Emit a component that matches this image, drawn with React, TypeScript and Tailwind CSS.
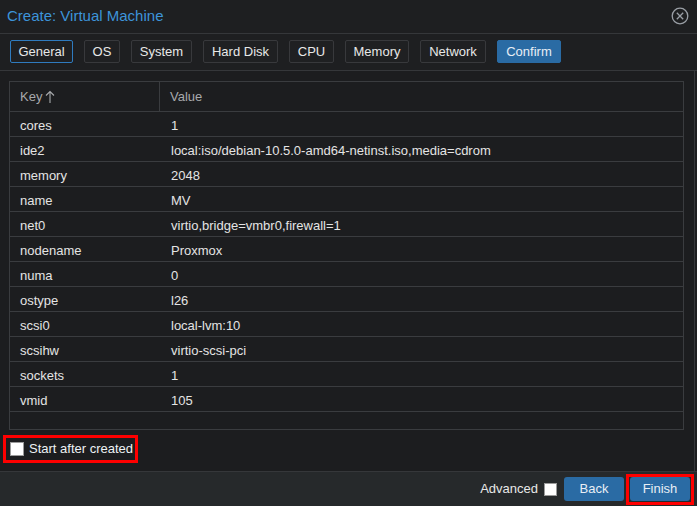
import React from 'react';

const tabs: { label: string; w: string }[] = [
  { label: 'General', w: 'w-[63px]' },
  { label: 'OS', w: 'w-[36px]' },
  { label: 'System', w: 'w-[61px]' },
  { label: 'Hard Disk', w: 'w-[75px]' },
  { label: 'CPU', w: 'w-[45px]' },
  { label: 'Memory', w: 'w-[64px]' },
  { label: 'Network', w: 'w-[66px]' },
  { label: 'Confirm', w: 'w-[64px]' },
];

const rows: [string, string][] = [
  ['cores', '1'],
  ['ide2', 'local:iso/debian-10.5.0-amd64-netinst.iso,media=cdrom'],
  ['memory', '2048'],
  ['name', 'MV'],
  ['net0', 'virtio,bridge=vmbr0,firewall=1'],
  ['nodename', 'Proxmox'],
  ['numa', '0'],
  ['ostype', 'l26'],
  ['scsi0', 'local-lvm:10'],
  ['scsihw', 'virtio-scsi-pci'],
  ['sockets', '1'],
  ['vmid', '105'],
];

export default function App() {
  return (
    <div
      className="w-[697px] h-[506px] flex flex-col bg-[#1c1d1f] text-[13px] text-[#e4e4e4] overflow-hidden"
      style={{ fontFamily: '"Liberation Sans", Arial, sans-serif' }}
    >
      {/* Header */}
      <div className="h-[34px] shrink-0 flex items-center justify-between pl-[7px] pr-[8px] border-b border-[#35373a] bg-[#1e1f21]">
        <span className="text-[15px] text-[#3d94d9]">Create: Virtual Machine</span>
        <svg width="18" height="18" viewBox="0 0 18 18" className="mt-[-2px]">
          <circle cx="9" cy="9" r="7.8" fill="none" stroke="#9a9fa6" strokeWidth="1.3" />
          <path d="M5.8 5.8 L12.2 12.2 M12.2 5.8 L5.8 12.2" stroke="#9a9fa6" strokeWidth="1.3" />
        </svg>
      </div>

      {/* Tabs */}
      <div className="h-[37px] shrink-0 flex items-start gap-[11px] pl-[10px] pt-[6px] border-b border-[#35373a] bg-[#1e1f21]">
        {tabs.map((t, i) => (
          <button
            key={t.label}
            className={
              t.w +
              ' h-[23px] shrink-0 rounded-[2px] border leading-none ' +
              (i === 0
                ? 'border-[#2f7bbf] bg-[#1f2022] text-[#e8e8e8]'
                : t.label === 'Confirm'
                ? 'border-[#2a6ba4] bg-[#2a6ba4] text-[#e8eef5]'
                : 'border-[#38393c] bg-[#1f2022] text-[#e8e8e8]')
            }
          >
            {t.label}
          </button>
        ))}
      </div>

      {/* Content */}
      <div className="flex-1 flex flex-col border-r border-[#35373a] mr-[2px] pt-[10px] pl-[9px] pr-[10px]">
        <div className="h-[349px] border border-[#3a3c3f] bg-[#1c1d1f] flex flex-col">
          <div className="h-[30px] flex border-b border-[#3a3c3f] text-[#a7a9ac]">
            <div className="w-[150px] border-r border-[#3a3c3f] flex items-center pl-[10px] gap-[3px]">
              Key
              <svg width="10" height="14" viewBox="0 0 10 14">
                <path d="M5 1.5 V13 M1 5.5 L5 1.5 L9 5.5" fill="none" stroke="#a7a9ac" strokeWidth="1.1" />
              </svg>
            </div>
            <div className="flex items-center pl-[10px]">Value</div>
          </div>
          {rows.map(([k, v]) => (
            <div key={k} className="h-[25px] flex items-center pt-[3px] border-b border-[#3a3c3f]">
              <div className="w-[150px] pl-[10px]">{k}</div>
              <div className="pl-[11px]">{v}</div>
            </div>
          ))}
        </div>

        <div className="mt-[5px] ml-[-6px] w-[135px] h-[28px] border-[3px] border-[#ff0000] flex items-center pl-[4px] gap-[5px]">
          <span className="w-[14px] h-[14px] bg-white border border-[#9a9a9a]" />
          <span className="text-[#eef2f5]">Start after created</span>
        </div>
      </div>

      {/* Footer */}
      <div className="h-[35px] shrink-0 bg-[#26292b] border-t border-[#35373a] flex items-center justify-end pr-[3px]">
        <span className="text-[#e8e8e8] mr-[6px]">Advanced</span>
        <span className="w-[13px] h-[13px] bg-white border border-[#9a9a9a] mr-[7px]" />
        <button className="w-[60px] h-[24px] rounded-[3px] bg-[#2a6ba4] text-[#e8eef5] mr-[2px]">Back</button>
        <div className="w-[68px] h-[31px] border-[3px] border-[#ff0000] flex items-center justify-center">
          <button className="w-[60px] h-[24px] rounded-[3px] bg-[#2a6ba4] text-[#e8eef5]">Finish</button>
        </div>
      </div>
    </div>
  );
}
